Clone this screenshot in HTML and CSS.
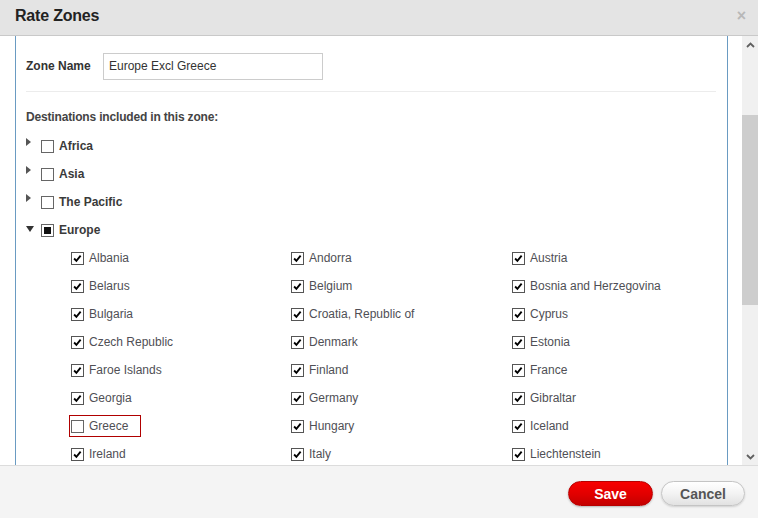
FILE: index.html
```html
<!DOCTYPE html>
<html>
<head>
<meta charset="utf-8">
<link rel="stylesheet" href="styles.css">
</head>
<body>
<div class="dialog">
  <div class="header">
    <div class="title">Rate Zones</div>
    <div class="close">×</div>
  </div>
  <div class="main">
    <div class="scrollarea">
      <div class="panel">
        <div class="zone-row">
          <label class="zone-label">Zone Name</label>
          <div class="input">Europe Excl Greece</div>
        </div>
        <div class="sep"></div>
        <div class="heading">Destinations included in this zone:</div>
        <div class="tree">
          <div class="node"><span class="tri right"></span><span class="cb"></span><span class="node-label">Africa</span></div>
          <div class="node"><span class="tri right"></span><span class="cb"></span><span class="node-label">Asia</span></div>
          <div class="node"><span class="tri right"></span><span class="cb"></span><span class="node-label">The Pacific</span></div>
          <div class="node"><span class="tri down"></span><span class="cb partial"><span class="dot"></span></span><span class="node-label">Europe</span></div>
          <div class="children">
            <div class="item"><span class="cb"><svg viewBox="0 0 13 13"><path d="M2.5 6.5 5.2 9.3 10.2 3.2"/></svg></span>Albania</div>
            <div class="item"><span class="cb"><svg viewBox="0 0 13 13"><path d="M2.5 6.5 5.2 9.3 10.2 3.2"/></svg></span>Andorra</div>
            <div class="item"><span class="cb"><svg viewBox="0 0 13 13"><path d="M2.5 6.5 5.2 9.3 10.2 3.2"/></svg></span>Austria</div>
            <div class="item"><span class="cb"><svg viewBox="0 0 13 13"><path d="M2.5 6.5 5.2 9.3 10.2 3.2"/></svg></span>Belarus</div>
            <div class="item"><span class="cb"><svg viewBox="0 0 13 13"><path d="M2.5 6.5 5.2 9.3 10.2 3.2"/></svg></span>Belgium</div>
            <div class="item"><span class="cb"><svg viewBox="0 0 13 13"><path d="M2.5 6.5 5.2 9.3 10.2 3.2"/></svg></span>Bosnia and Herzegovina</div>
            <div class="item"><span class="cb"><svg viewBox="0 0 13 13"><path d="M2.5 6.5 5.2 9.3 10.2 3.2"/></svg></span>Bulgaria</div>
            <div class="item"><span class="cb"><svg viewBox="0 0 13 13"><path d="M2.5 6.5 5.2 9.3 10.2 3.2"/></svg></span>Croatia, Republic of</div>
            <div class="item"><span class="cb"><svg viewBox="0 0 13 13"><path d="M2.5 6.5 5.2 9.3 10.2 3.2"/></svg></span>Cyprus</div>
            <div class="item"><span class="cb"><svg viewBox="0 0 13 13"><path d="M2.5 6.5 5.2 9.3 10.2 3.2"/></svg></span>Czech Republic</div>
            <div class="item"><span class="cb"><svg viewBox="0 0 13 13"><path d="M2.5 6.5 5.2 9.3 10.2 3.2"/></svg></span>Denmark</div>
            <div class="item"><span class="cb"><svg viewBox="0 0 13 13"><path d="M2.5 6.5 5.2 9.3 10.2 3.2"/></svg></span>Estonia</div>
            <div class="item"><span class="cb"><svg viewBox="0 0 13 13"><path d="M2.5 6.5 5.2 9.3 10.2 3.2"/></svg></span>Faroe Islands</div>
            <div class="item"><span class="cb"><svg viewBox="0 0 13 13"><path d="M2.5 6.5 5.2 9.3 10.2 3.2"/></svg></span>Finland</div>
            <div class="item"><span class="cb"><svg viewBox="0 0 13 13"><path d="M2.5 6.5 5.2 9.3 10.2 3.2"/></svg></span>France</div>
            <div class="item"><span class="cb"><svg viewBox="0 0 13 13"><path d="M2.5 6.5 5.2 9.3 10.2 3.2"/></svg></span>Georgia</div>
            <div class="item"><span class="cb"><svg viewBox="0 0 13 13"><path d="M2.5 6.5 5.2 9.3 10.2 3.2"/></svg></span>Germany</div>
            <div class="item"><span class="cb"><svg viewBox="0 0 13 13"><path d="M2.5 6.5 5.2 9.3 10.2 3.2"/></svg></span>Gibraltar</div>
            <div class="item"><span class="focus"><span class="cb empty"></span>Greece</span></div>
            <div class="item"><span class="cb"><svg viewBox="0 0 13 13"><path d="M2.5 6.5 5.2 9.3 10.2 3.2"/></svg></span>Hungary</div>
            <div class="item"><span class="cb"><svg viewBox="0 0 13 13"><path d="M2.5 6.5 5.2 9.3 10.2 3.2"/></svg></span>Iceland</div>
            <div class="item"><span class="cb"><svg viewBox="0 0 13 13"><path d="M2.5 6.5 5.2 9.3 10.2 3.2"/></svg></span>Ireland</div>
            <div class="item"><span class="cb"><svg viewBox="0 0 13 13"><path d="M2.5 6.5 5.2 9.3 10.2 3.2"/></svg></span>Italy</div>
            <div class="item"><span class="cb"><svg viewBox="0 0 13 13"><path d="M2.5 6.5 5.2 9.3 10.2 3.2"/></svg></span>Liechtenstein</div>
          </div>
        </div>
      </div>
    </div>
    <div class="scrollbar">
      <div class="arrow up"><svg viewBox="0 0 9 6"><path d="M1 5 4.5 1.5 8 5"/></svg></div>
      <div class="track">
        <div class="track-top"></div>
        <div class="thumb"></div>
      </div>
      <div class="arrow down"><svg viewBox="0 0 9 6"><path d="M1 1 4.5 4.5 8 1"/></svg></div>
    </div>
  </div>
  <div class="footer">
    <button class="btn save">Save</button>
    <button class="btn cancel">Cancel</button>
  </div>
</div>
</body>
</html>
```
FILE: styles.css
```css
* { box-sizing: border-box; }
html, body { margin: 0; padding: 0; }
body {
  font-family: "Liberation Sans", Arial, sans-serif;
  font-size: 12px;
  color: #333;
  background: #fff;
}
.dialog {
  width: 758px;
  height: 518px;
  display: flex;
  flex-direction: column;
  overflow: hidden;
}
.header {
  height: 36px;
  flex: none;
  background: #e4e4e4;
  border-bottom: 1px solid #c9c9c9;
  display: flex;
  align-items: center;
  justify-content: space-between;
  padding: 0 12px 0 15px;
}
.title {
  font-size: 16px;
  font-weight: bold;
  color: #222;
  letter-spacing: -0.2px;
  margin-top: -3px;
}
.close {
  font-size: 16px;
  font-weight: bold;
  color: #b8b8b8;
  margin-top: -3px;
}
.main {
  flex: 1;
  display: flex;
  min-height: 0;
  overflow: hidden;
}
.scrollarea {
  flex: 1;
  background: #fff;
  padding: 0 14px 0 15px;
  overflow: hidden;
}
.panel {
  border-left: 1px solid #6a9bc2;
  border-right: 1px solid #6a9bc2;
  min-height: 100%;
  padding: 17px 11px 0 10px;
}
.zone-row {
  display: flex;
  align-items: center;
  height: 27px;
}
.zone-label {
  font-weight: bold;
  color: #333;
  width: 77px;
  margin-top: -2px;
}
.input {
  width: 220px;
  height: 27px;
  border: 1px solid #ccc;
  padding: 0 5px;
  line-height: 25px;
  color: #333;
}
.sep {
  height: 1px;
  background: #ececec;
  margin-top: 11px;
}
.heading {
  font-weight: bold;
  color: #444;
  margin-top: 18px;
  line-height: 14px;
  letter-spacing: -0.17px;
}
.tree { margin-top: 8px; }
.node {
  display: flex;
  align-items: center;
  height: 28px;
}
.tri {
  width: 0;
  height: 0;
  flex: none;
}
.tri.right {
  border-left: 5px solid #555;
  border-top: 4px solid transparent;
  border-bottom: 4px solid transparent;
  margin: 0 10px 0 0;
  transform: translateY(-4px);
}
.tri.down {
  border-top: 6px solid #333;
  border-left: 4px solid transparent;
  border-right: 4px solid transparent;
  margin: 0 7px 0 0;
  transform: translateY(-1px);
}
.cb {
  width: 13px;
  height: 13px;
  border: 1px solid #555;
  background: #fff;
  flex: none;
  display: inline-flex;
  align-items: center;
  justify-content: center;
}
.cb.partial .dot {
  width: 7px;
  height: 7px;
  background: #111;
}
.node .cb { border-color: #666; }
.node-label {
  font-weight: bold;
  color: #3a3a3a;
  margin-left: 5px;
}
.children {
  display: grid;
  grid-template-columns: 220px 221px 221px;
  margin-left: 45px;
}
.item {
  display: flex;
  align-items: center;
  height: 28px;
  color: #4f4f55;
  white-space: nowrap;
}
.item > .cb { margin-right: 5px; }
.cb svg {
  width: 11px;
  height: 11px;
  display: block;
}
.cb svg path {
  fill: none;
  stroke: #000;
  stroke-width: 2.2;
}
.focus {
  display: inline-flex;
  align-items: center;
  border: 1px solid #b00000;
  height: 22px;
  margin-left: -2px;
  padding: 0 12px 0 1px;
}
.focus .cb { margin-right: 5px; border-color: #666; }
.scrollbar {
  width: 16px;
  flex: none;
  background: #f0f0f0;
  display: flex;
  flex-direction: column;
}
.arrow {
  height: 17px;
  display: flex;
  align-items: center;
  justify-content: center;
  flex: none;
}
.arrow svg {
  width: 9px;
  height: 6px;
}
.arrow path {
  fill: none;
  stroke: #606060;
  stroke-width: 1.8;
}
.track {
  flex: 1;
  display: flex;
  flex-direction: column;
}
.track-top { height: 62px; }
.thumb {
  height: 190px;
  background: #cdcdcd;
}
.footer {
  height: 53px;
  flex: none;
  background: #f4f4f4;
  border-top: 1px solid #dcdcdc;
  display: flex;
  justify-content: flex-end;
  align-items: flex-start;
  gap: 8px;
  padding: 15px 13px 0 0;
}
.btn {
  font-family: "Liberation Sans", Arial, sans-serif;
  font-size: 14px;
  font-weight: bold;
  height: 25px;
  border-radius: 13px;
  padding: 0;
  cursor: pointer;
}
.save {
  width: 85px;
  color: #fff;
  border: 1px solid #b80000;
  background: linear-gradient(#f80000, #e00000 55%, #c40000);
  box-shadow: 0 1px 2px rgba(0,0,0,0.25);
}
.cancel {
  width: 84px;
  color: #555;
  border: 1px solid #c4c4c4;
  background: linear-gradient(#ffffff, #f3f3f3 50%, #e2e2e2);
  box-shadow: 0 1px 2px rgba(0,0,0,0.15);
}
```
